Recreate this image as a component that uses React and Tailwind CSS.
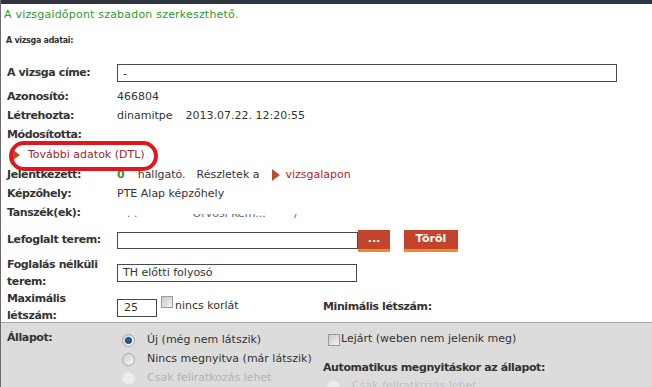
import React from "react";

const Label = ({ children, className = "" }) => (
  <div className={`w-[110px] shrink-0 font-bold tracking-[-0.4px] text-[#333] ${className}`}>{children}</div>
);

const Arrow = () => (
  <svg width="8" height="12" viewBox="0 0 8 12" className="shrink-0">
    <polygon points="0,0 8,6 0,12" fill="#b5502b" />
  </svg>
);

const Checkbox = () => (
  <span className="inline-block w-[12px] h-[12px] border border-[#9a9a9a] bg-gradient-to-br from-[#c8c8c8] to-[#f4f4f4] shrink-0" />
);

const Radio = ({ checked, disabled }) => (
  <span
    className={`inline-flex items-center justify-center w-[13px] h-[13px] rounded-full border shrink-0 ${
      disabled
        ? "border-[#e6e6e6] bg-[#ececec]"
        : "border-[#a8a8a8] bg-gradient-to-br from-[#cfcfcf] to-[#f7f7f7]"
    }`}
  >
    {checked && <span className="w-[7px] h-[7px] rounded-full bg-[#1d5d94] border border-[#0d3b66]" />}
  </span>
);

const Button = ({ children, className = "" }) => (
  <div
    className={`h-[22px] bg-[#c2442c] border-b-[3px] border-[#f08a2a] text-white font-bold flex items-center justify-center ${className}`}
  >
    {children}
  </div>
);

export default function App() {
  return (
    <div className="w-[652px] h-[387px] overflow-hidden bg-white border-l border-[#6b6b6b] font-['DejaVu_Sans',Verdana,sans-serif] text-[11px] text-[#333] relative">
      <div className="h-[4px] bg-[#303542]" />
      <p className="pl-[3px] pt-[4px] leading-[13px] tracking-[0.2px] text-[#2e9b2e]">A vizsgaidőpont szabadon szerkeszthető.</p>
      <p className="pl-[5px] mt-[14px] text-[8px] font-bold tracking-[-0.3px] leading-[11px] text-[#333]">A vizsga adatai:</p>

      <div className="pl-[6px] mt-[17px]">
        <div className="flex items-center h-[20px]">
          <Label>A vizsga címe:</Label>
          <div className="w-[500px] h-[18px] border border-[#4a4a4a] flex items-center px-[5px] leading-none">-</div>
        </div>
        <div className="flex items-center h-[19px] mt-[5px]">
          <Label>Azonosító:</Label>
          <span>466804</span>
        </div>
        <div className="flex items-center h-[19px]">
          <Label>Létrehozta:</Label>
          <span>dinamitpe</span>
          <span className="ml-[13px]">2013.07.22. 12:20:55</span>
        </div>
        <div className="flex items-center h-[19px]">
          <Label>Módosította:</Label>
        </div>
        <div className="flex items-center h-[20px] pl-[5px] gap-[8px]">
          <Arrow />
          <span className="text-[#a5232b]">További adatok (DTL)</span>
        </div>
        <div className="flex items-center h-[20px]">
          <Label>Jelentkezett:</Label>
          <span className="font-bold text-[#2e9b2e]">0</span>
          <span className="ml-[13px]">hallgató.</span>
          <span className="ml-[11px]">Részletek a</span>
          <span className="ml-[12px]"><Arrow /></span>
          <span className="ml-[6px] text-[#b01c2e]">vizsgalapon</span>
        </div>
        <div className="flex items-center h-[19px]">
          <Label>Képzőhely:</Label>
          <span>PTE Alap képzőhely</span>
        </div>
        <div className="flex items-center h-[19px]">
          <Label>Tanszék(ek):</Label>
          <div className="h-[6px] mt-[6px] overflow-hidden flex text-[#666]">
            <span className="-mt-[7px] leading-[13px] ml-[10px]">. .</span>
            <span className="-mt-[7px] leading-[13px] ml-[55px]">Orvosi Kém...</span>
            <span className="-mt-[7px] leading-[13px] ml-[22px]">' /</span>
          </div>
        </div>

        <div className="flex items-center h-[23px] mt-[6px]">
          <Label>Lefoglalt terem:</Label>
          <div className="w-[241px] h-[17px] border border-[#4a4a4a]" />
          <Button className="w-[32px]">...</Button>
          <Button className="w-[54px] ml-[14px]">Töröl</Button>
        </div>

        <div className="flex items-center h-[35px] mt-[3px]">
          <Label className="leading-[17px]">
            Foglalás nélküli
            <br />
            terem:
          </Label>
          <div className="w-[240px] h-[18px] border border-[#4a4a4a] flex items-center px-[5px] leading-none">TH előtti folyosó</div>
        </div>

        <div className="flex items-center h-[32px]">
          <Label className="leading-[17px] mt-[2px]">
            Maximális
            <br />
            létszám:
          </Label>
          <div className="w-[206px] shrink-0 flex items-center mt-[3px]">
            <div className="w-[40px] h-[18px] border border-[#4a4a4a] flex items-center px-[6px] leading-none">25</div>
            <span className="ml-[4px] -mt-[5px]"><Checkbox /></span>
            <span className="ml-[2px] -mt-[2px]">nincs korlát</span>
          </div>
          <span className="font-bold tracking-[-0.4px] mt-[3px]">Minimális létszám:</span>
        </div>
      </div>

      <div className="bg-[#dcdcdc] border-t border-[#a3a3a3] pl-[6px] pt-[8px] h-[80px] flex">
        <Label className="leading-[14px]">Állapot:</Label>
        <div className="w-[206px] shrink-0 flex flex-col pl-[5px]">
          <div className="flex items-center h-[19px] gap-[12px]">
            <Radio checked />
            <span>Új (még nem látszik)</span>
          </div>
          <div className="flex items-center h-[19px] gap-[12px]">
            <Radio />
            <span>Nincs megnyitva (már látszik)</span>
          </div>
          <div className="flex items-center h-[19px] gap-[12px] text-[#b3b3b3]">
            <Radio disabled />
            <span>Csak feliratkozás lehet</span>
          </div>
        </div>
        <div className="flex flex-col">
          <div className="flex items-center h-[17px] gap-[1px] pl-[5px]">
            <Checkbox />
            <span>Lejárt (weben nem jelenik meg)</span>
          </div>
          <div className="flex items-center h-[19px] mt-[11px] font-bold tracking-[-0.4px]">Automatikus megnyitáskor az állapot:</div>
          <div className="flex items-center h-[16px] gap-[12px] pl-[4px] text-[#c2c2c2]">
            <Radio disabled />
            <span>Csak feliratkozás lehet</span>
          </div>
        </div>
      </div>

      <div className="absolute left-[8px] top-[141px] w-[149px] h-[30px] rounded-[15px] border-[4px] border-[#e2161f]" />
    </div>
  );
}
